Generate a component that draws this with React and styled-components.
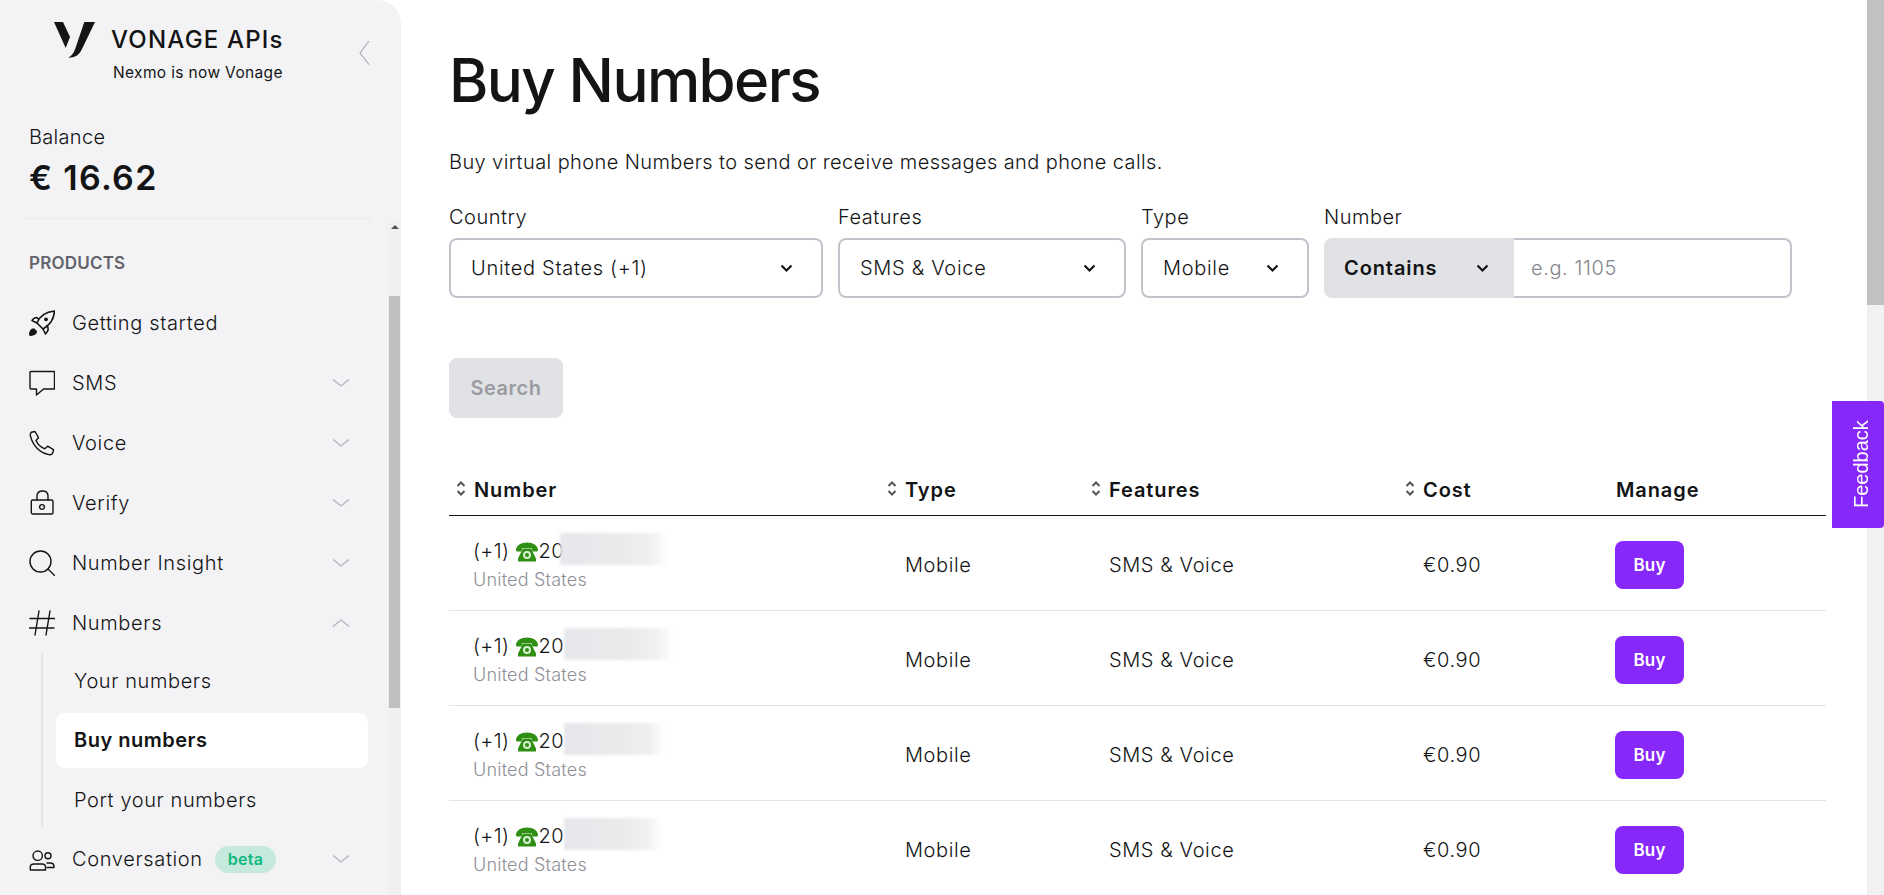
import React from "react";
import styled, { createGlobalStyle } from "styled-components";

const GlobalStyle = createGlobalStyle`
  html, body {
    margin: 0;
    height: 100%;
    overflow: hidden;
    background: #fff;
    font-family: Inter, "Liberation Sans", sans-serif;
    color: #131415;
  }
  * { box-sizing: border-box; }
`;

const NAV = [
  { id: "rocket", label: "Getting started" },
  { id: "sms", label: "SMS", arrow: "down" },
  { id: "voice", label: "Voice", arrow: "down" },
  { id: "lock", label: "Verify", arrow: "down" },
  { id: "search", label: "Number Insight", arrow: "down" },
  { id: "hash", label: "Numbers", arrow: "up" },
];

const ROWS = [{ blur: 108, left: -4 }, { blur: 109, left: 0 }, { blur: 101, left: 0 }, { blur: 98, left: 0 }];

const NavIcon = ({ id }) => {
  const common = { width: 26, height: 26, viewBox: "0 0 26 26", fill: "none", stroke: "#131415", strokeWidth: 1.4, strokeLinejoin: "round", strokeLinecap: "round" };
  if (id === "rocket") return (
    <svg {...common} strokeWidth="1.600">
      <path d="M8 13C10.500 6.500 17 1.800 25.500 1C25 9.500 20 15.500 14 19Z" />
      <path d="M9.500 9C7.500 6.500 5 7.500 3 10.500L8 13" />
      <path d="M18 15.500C19.800 18 19 21.500 16.500 24L14 19" />
      <circle cx="17" cy="9.300" r="1.900" fill="#131415" stroke="none" />
      <path d="M1 25C0.500 22.500 1.800 19.500 4.800 19L7.300 21.500C6.800 24 4 25.500 1 25Z" fill="#131415" />
    </svg>
  );
  if (id === "sms") return (
    <svg {...common}>
      <path d="M2 1.500H24.800C25.200 1.500 25.500 1.800 25.500 2.200V18.300C25.500 18.700 25.200 19 24.800 19H14.500L7.500 25V19H2C1.400 19 1 18.600 1 18V2.500C1 1.900 1.400 1.500 2 1.500Z" />
    </svg>
  );
  if (id === "voice") return (
    <svg {...common}>
      <path d="M2.500 2.200L6 1.500L9.500 7.700L7 10.500C8.800 14.500 11.800 17.300 15.800 18.800L18.600 16.200L24.500 19.600L23.800 22.800C23.300 24.300 21.700 25 20 24.600C10.500 22.600 3.700 15.500 1.500 6.200C1.100 4.500 1.300 3 2.500 2.200Z" />
    </svg>
  );
  if (id === "lock") return (
    <svg {...common}>
      <path d="M8 10V6C8 3 10 1 13.500 1C17 1 19 3 19 6V10" />
      <rect x="2.300" y="10" width="21.700" height="14" rx="1.500" />
      <circle cx="13" cy="17" r="2.400" />
    </svg>
  );
  if (id === "search") return (
    <svg {...common}>
      <circle cx="11.500" cy="11.500" r="10.500" />
      <path d="M19 19L25.500 25.500" />
    </svg>
  );
  if (id === "hash") return (
    <svg {...common}>
      <path d="M10 1L6 25M21 1L17 25M1 8.500H26M0.500 18H25" />
    </svg>
  );
  return (
    <svg {...common}>
      <circle cx="8.700" cy="9.700" r="4.700" />
      <circle cx="19" cy="9.700" r="3" />
      <path d="M1.300 24V21C1.300 19 3 18 5 18H13C15 18 16.500 19 16.500 21V24Z" />
      <path d="M18 17H21C23.500 17 25 18.500 25 20.500V21.500H18" />
    </svg>
  );
};

const Caret = ({ up }) => (
  <CaretSvg viewBox="0 0 18 10" fill="none" stroke="#b3b4ba" strokeWidth="1.300">
    <path d={up ? "M1 8.500L9 2L17 8.500" : "M1 1.500L9 8L17 1.500"} />
  </CaretSvg>
);

const SelectArrow = () => (
  <svg width="13" height="9" viewBox="0 0 13 9" fill="none" stroke="#131415" strokeWidth="2.200">
    <path d="M1.500 1.500L6.500 6.500L11.500 1.500" />
  </svg>
);

const SortIcon = () => (
  <SortSvg width="10" height="17" viewBox="0 0 10 17" fill="none" stroke="#55565c" strokeWidth="2">
    <path d="M1.500 6L5 2.500L8.500 6M1.500 11L5 14.500L8.500 11" />
  </SortSvg>
);

const PhoneGlyph = () => (
  <GlyphSvg width="22" height="20" viewBox="0 0 22 20">
    <path fill="#2f8f12" d="M0 8C0 3.500 5 0.500 11 0.500C17 0.500 22 3.500 22 8L21.500 9.500H16.500L15.500 6H6.500L5.500 9.500H0.500Z" />
    <path fill="#2f8f12" d="M7 6.500H15L20 16.500V19.500H2V16.500Z" />
    <circle cx="11" cy="13" r="4" fill="#d8eed2" />
    <circle cx="11" cy="13" r="2" fill="#2f8f12" />
  </GlyphSvg>
);

const App = () => (
  <Page>
    <GlobalStyle />
    <Sidebar>
      <Brand>
        <svg width="42" height="36" viewBox="0 0 42 36">
          <path fill="#131415" d="M0 0H9L16 15L11.700 26Z" />
          <path fill="#131415" d="M30.300 0H41L27.500 28C25 33 21 35.800 14.300 35.700C18 33.500 19.800 30.500 21 27.500Z" />
        </svg>
        <BrandText>
          <Wordmark>VONAGE APIs</Wordmark>
          <Tagline>Nexmo is now Vonage</Tagline>
        </BrandText>
        <Collapse width="11" height="25" viewBox="0 0 11 25" fill="none" stroke="#a6a7ad" strokeWidth="1.100">
          <path d="M10 1L1 13L10 24.500" />
        </Collapse>
      </Brand>
      <Balance>
        <BalanceLabel>Balance</BalanceLabel>
        <BalanceValue>€ 16.62</BalanceValue>
      </Balance>
      <Scroller>
        <NavColumn>
          <SectionTitle>PRODUCTS</SectionTitle>
          {NAV.map((item) => (
            <NavRow key={item.id}>
              <NavIcon id={item.id} />
              <NavLabel>{item.label}</NavLabel>
              {item.arrow && <Caret up={item.arrow === "up"} />}
            </NavRow>
          ))}
          <SubList>
            <SubItem>Your numbers</SubItem>
            <SubItem $active>Buy numbers</SubItem>
            <SubItem>Port your numbers</SubItem>
          </SubList>
          <NavRow $spaced>
            <NavIcon id="users" />
            <NavLabel>Conversation</NavLabel>
            <Beta>beta</Beta>
            <Caret />
          </NavRow>
        </NavColumn>
        <SideTrack>
          <UpArrow />
          <SideThumb />
        </SideTrack>
      </Scroller>
    </Sidebar>

    <Main>
      <Title>Buy Numbers</Title>
      <Lead>Buy virtual phone Numbers to send or receive messages and phone calls.</Lead>
      <Filters>
        <Field>
          <FieldLabel>Country</FieldLabel>
          <SelectBox $width={374}>United States (+1)<SelectArrow /></SelectBox>
        </Field>
        <Field>
          <FieldLabel>Features</FieldLabel>
          <SelectBox $width={288}>SMS &amp; Voice<SelectArrow /></SelectBox>
        </Field>
        <Field>
          <FieldLabel>Type</FieldLabel>
          <SelectBox $width={168}>Mobile<SelectArrow /></SelectBox>
        </Field>
        <Field>
          <FieldLabel>Number</FieldLabel>
          <NumberGroup>
            <ContainsBox>Contains<SelectArrow /></ContainsBox>
            <NumberInput placeholder="e.g. 1105" />
          </NumberGroup>
        </Field>
      </Filters>
      <SearchButton>Search</SearchButton>
      <Table>
        <HeadRow>
          <HeadCell><SortIcon />Number</HeadCell>
          <HeadCell><SortIcon />Type</HeadCell>
          <HeadCell><SortIcon />Features</HeadCell>
          <HeadCell><SortIcon />Cost</HeadCell>
          <HeadCell $plain>Manage</HeadCell>
        </HeadRow>
        {ROWS.map((row, i) => (
          <BodyRow key={i}>
            <NumberCell>
              <PhoneLine>
                (+1) <PhoneGlyph />20
                <Blurred $width={row.blur} $left={row.left} />
              </PhoneLine>
              <CountryName>United States</CountryName>
            </NumberCell>
            <Cell>Mobile</Cell>
            <Cell>SMS &amp; Voice</Cell>
            <Cell>€0.90</Cell>
            <Cell><BuyButton>Buy</BuyButton></Cell>
          </BodyRow>
        ))}
      </Table>
    </Main>

    <PageTrack><PageThumb /></PageTrack>
    <Feedback>Feedback</Feedback>
  </Page>
);

const Page = styled.div`
  position: relative;
  display: flex;
  height: 895px;
  overflow: hidden;
`;

const Sidebar = styled.aside`
  flex: 0 0 401px;
  display: flex;
  flex-direction: column;
  height: 100%;
  background: #f3f3f5;
  border-top-right-radius: 24px;
  overflow: hidden;
`;

const Brand = styled.div`
  display: flex;
  align-items: flex-start;
  padding: 22px 31px 0 54px;
  height: 123px;
`;

const BrandText = styled.div`
  margin-left: 15px;
  padding-top: 4px;
  text-align: left;
`;

const Wordmark = styled.div`
  font-size: 24px;
  font-weight: 500;
  line-height: 28px;
  letter-spacing: 1.2px;
  white-space: nowrap;
`;

const Tagline = styled.div`
  margin: 9px 0 0 2px;
  font-size: 15.500px;
  line-height: 20px;
  letter-spacing: 0.35px;
  white-space: nowrap;
`;

const Collapse = styled.svg`
  margin: 18px 0 0 auto;
`;

const Balance = styled.div`
  margin: 0 30px 0 26px;
  padding: 0 0 20px 3px;
  height: 97px;
  border-bottom: 3px solid #eeeef0;
`;

const BalanceLabel = styled.div`
  font-size: 20px;
  font-weight: 300;
  line-height: 28px;
  letter-spacing: 0.3px;
`;

const BalanceValue = styled.div`
  margin-top: 7px;
  font-size: 34px;
  font-weight: 600;
  line-height: 40px;
  letter-spacing: 1.3px;
`;

const Scroller = styled.div`
  flex: 1;
  display: flex;
  min-height: 0;
`;

const NavColumn = styled.nav`
  flex: 1;
  min-width: 0;
  padding: 0 0 0 29px;
`;

const SectionTitle = styled.div`
  padding: 33px 0 0;
  height: 73px;
  font-size: 17px;
  font-weight: 600;
  line-height: 20px;
  letter-spacing: 0.2px;
  color: #62636b;
`;

const NavRow = styled.div`
  display: flex;
  align-items: center;
  height: 60px;
  padding-right: 38px;
  margin-top: ${(p) => (p.$spaced ? "2px" : "0")};
`;

const NavLabel = styled.span`
  margin-left: 17px;
  font-size: 20px;
  font-weight: 300;
  letter-spacing: 0.65px;
`;

const CaretSvg = styled.svg`
  width: 18px;
  height: 10px;
  margin-left: auto;
`;

const SubList = styled.div`
  display: flex;
  flex-direction: column;
  gap: 4.500px;
  margin-left: 12px;
  margin-right: 20px;
  padding-left: 13px;
  border-left: 2px solid #e4e4e7;
`;

const SubItem = styled.div`
  display: flex;
  align-items: center;
  height: 55px;
  padding-left: 18px;
  border-radius: 8px;
  font-size: 20px;
  font-weight: ${(p) => (p.$active ? 600 : 300)};
  letter-spacing: ${(p) => (p.$active ? "0.5px" : "0.6px")};
  background: ${(p) => (p.$active ? "#fff" : "transparent")};
`;

const Beta = styled.span`
  margin-left: 12px;
  padding: 0 13px;
  height: 27px;
  line-height: 26px;
  border-radius: 14px;
  background: #c5e9dc;
  color: #10b981;
  font-size: 16px;
  font-weight: 600;
  letter-spacing: 0.3px;
`;

const SideTrack = styled.div`
  flex: 0 0 13px;
  position: relative;
  background: #f0f0f1;
  padding: 76px 1px 0;
`;

const UpArrow = styled.div`
  position: absolute;
  top: 5px;
  left: 3px;
  border-left: 4px solid transparent;
  border-right: 4px solid transparent;
  border-bottom: 4px solid #505050;
`;

const SideThumb = styled.div`
  height: 412px;
  background: #bfbfbf;
`;

const Main = styled.main`
  flex: 1;
  min-width: 0;
  padding: 45px 41px 0 48px;
`;

const Title = styled.h1`
  margin: 0;
  font-size: 60px;
  font-weight: 500;
  line-height: 70px;
  letter-spacing: -1.6px;
`;

const Lead = styled.p`
  margin: 35px 0 0;
  font-size: 20px;
  font-weight: 300;
  line-height: 24px;
  letter-spacing: 0.4px;
`;

const Filters = styled.div`
  display: flex;
  gap: 15px;
  margin-top: 31px;
`;

const Field = styled.div`
  display: flex;
  flex-direction: column;
`;

const FieldLabel = styled.label`
  font-size: 20px;
  font-weight: 300;
  line-height: 24px;
  margin-bottom: 9px;
  letter-spacing: 0.5px;
`;

const SelectBox = styled.div`
  display: flex;
  align-items: center;
  justify-content: space-between;
  width: ${(p) => p.$width}px;
  height: 60px;
  padding: 0 28px 0 20px;
  border: 2px solid #c2c4cc;
  border-radius: 8px;
  background: #fff;
  font-size: 20px;
  font-weight: 300;
  letter-spacing: 0.7px;
`;

const NumberGroup = styled.div`
  display: flex;
  width: 468px;
  height: 60px;
`;

const ContainsBox = styled.div`
  display: flex;
  align-items: center;
  justify-content: space-between;
  flex: 0 0 190px;
  padding: 0 25px 0 20px;
  border-radius: 8px 0 0 8px;
  background: #e1e2e6;
  font-size: 20px;
  font-weight: 600;
  letter-spacing: 0.9px;
`;

const NumberInput = styled.input`
  flex: 1;
  min-width: 0;
  padding: 0 0 0 17px;
  border: 2px solid #c2c4cc;
  border-left: 0;
  border-radius: 0 8px 8px 0;
  outline: none;
  font-family: inherit;
  font-size: 20px;
  font-weight: 300;
  letter-spacing: 0.6px;
  &::placeholder { color: #85868c; }
`;

const SearchButton = styled.button`
  display: block;
  width: 114px;
  height: 60px;
  margin-top: 60px;
  border: 0;
  border-radius: 8px;
  background: #e1e2e6;
  color: #9a9ba1;
  font-family: inherit;
  font-size: 20px;
  font-weight: 600;
  letter-spacing: 0.5px;
`;

const Table = styled.div`
  margin-top: 42px;
  width: 1377px;
`;

const COLUMNS = "431px 204px 314px 193px 235px";

const HeadRow = styled.div`
  display: grid;
  grid-template-columns: ${COLUMNS};
  height: 56px;
  border-bottom: 1px solid #131415;
`;

const HeadCell = styled.div`
  display: flex;
  align-items: center;
  padding-top: 5px;
  padding-left: ${(p) => (p.$plain ? "25px" : "7px")};
  font-size: 20px;
  font-weight: 600;
  letter-spacing: 0.9px;
`;

const SortSvg = styled.svg`
  margin-right: 8px;
  margin-top: -4px;
`;

const BodyRow = styled.div`
  display: grid;
  grid-template-columns: ${COLUMNS};
  height: 95px;
  border-bottom: 1px solid #e4e4e7;
`;

const Cell = styled.div`
  display: flex;
  align-items: center;
  padding: 4px 0 0 25px;
  font-size: 20px;
  font-weight: 300;
  letter-spacing: 0.6px;
`;

const NumberCell = styled.div`
  padding: 19px 0 0 24px;
`;

const PhoneLine = styled.div`
  display: flex;
  align-items: center;
  height: 32px;
  white-space: pre;
  font-size: 20px;
  font-weight: 300;
  letter-spacing: 0.4px;
`;

const GlyphSvg = styled.svg`
  margin: 2px 1px 0 0;
`;

const Blurred = styled.div`
  width: ${(p) => p.$width}px;
  height: 32px;
  margin-top: -4px;
  margin-left: ${(p) => p.$left}px;
  background: linear-gradient(90deg, #e6e7ec, #eaeaec 55%, #f0f0f0 85%, #fff);
  filter: blur(1.500px);
`;

const CountryName = styled.div`
  margin-top: 3px;
  font-size: 18px;
  font-weight: 300;
  line-height: 20px;
  color: #8f9096;
  letter-spacing: 0.2px;
`;

const BuyButton = styled.button`
  width: 69px;
  height: 48px;
  margin-left: -1px;
  border: 0;
  border-radius: 8px;
  background: #8728fb;
  color: #fff;
  font-family: inherit;
  font-size: 17px;
  font-weight: 600;
  letter-spacing: 0.2px;
`;

const PageTrack = styled.div`
  flex: 0 0 17px;
  background: #f1f1f1;
`;

const PageThumb = styled.div`
  height: 305px;
  background: #c1c1c1;
`;

const Feedback = styled.div`
  position: absolute;
  top: 401px;
  right: 0;
  width: 52px;
  height: 127px;
  display: flex;
  align-items: center;
  justify-content: center;
  padding-right: 7px;
  border-radius: 4px 0 0 4px;
  background: #8728fb;
  color: #fff;
  font-family: "Liberation Sans", sans-serif;
  font-size: 20px;
  writing-mode: vertical-rl;
  transform: rotate(180deg);
`;

export default App;
